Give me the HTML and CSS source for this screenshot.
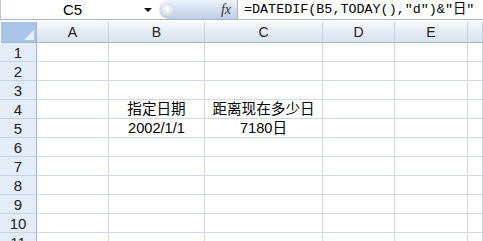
FILE: index.html
```html
<!DOCTYPE html>
<html lang="zh-CN">

<head>
    <meta charset="UTF-8">
    <title>DATEDIF</title>
    <link rel="stylesheet" href="styles.css">
</head>

<body>

    <!-- Formula Bar -->
    <div class="formula-bar">
        <div class="name-box">
            <span class="name">C5</span>
            <span class="arrow"></span>
        </div>
        <div class="fx-zone">
            <span class="knob"></span>
            <span class="fx">fx</span>
        </div>
        <div class="formula">=DATEDIF(B5,TODAY(),"d")&amp;"日"</div>
    </div>

    <!-- Sheet -->
    <div class="sheet">
        <div class="corner"><span class="tri"></span></div>
        <div class="col-head">A</div>
        <div class="col-head">B</div>
        <div class="col-head">C</div>
        <div class="col-head">D</div>
        <div class="col-head">E</div>
        <div class="col-head"></div>

        <div class="row-head">1</div>
        <div class="cell"></div><div class="cell"></div><div class="cell"></div><div class="cell"></div><div class="cell"></div><div class="cell"></div>

        <div class="row-head">2</div>
        <div class="cell"></div><div class="cell"></div><div class="cell"></div><div class="cell"></div><div class="cell"></div><div class="cell"></div>

        <div class="row-head">3</div>
        <div class="cell"></div><div class="cell"></div><div class="cell"></div><div class="cell"></div><div class="cell"></div><div class="cell"></div>

        <div class="row-head">4</div>
        <div class="cell"></div>
        <div class="cell">指定日期</div>
        <div class="cell">距离现在多少日</div>
        <div class="cell"></div><div class="cell"></div><div class="cell"></div>

        <div class="row-head">5</div>
        <div class="cell"></div>
        <div class="cell">2002/1/1</div>
        <div class="cell">7180日</div>
        <div class="cell"></div><div class="cell"></div><div class="cell"></div>

        <div class="row-head">6</div>
        <div class="cell"></div><div class="cell"></div><div class="cell"></div><div class="cell"></div><div class="cell"></div><div class="cell"></div>

        <div class="row-head">7</div>
        <div class="cell"></div><div class="cell"></div><div class="cell"></div><div class="cell"></div><div class="cell"></div><div class="cell"></div>

        <div class="row-head">8</div>
        <div class="cell"></div><div class="cell"></div><div class="cell"></div><div class="cell"></div><div class="cell"></div><div class="cell"></div>

        <div class="row-head">9</div>
        <div class="cell"></div><div class="cell"></div><div class="cell"></div><div class="cell"></div><div class="cell"></div><div class="cell"></div>

        <div class="row-head">10</div>
        <div class="cell"></div><div class="cell"></div><div class="cell"></div><div class="cell"></div><div class="cell"></div><div class="cell"></div>

        <div class="row-head">11</div>
        <div class="cell"></div><div class="cell"></div><div class="cell"></div><div class="cell"></div><div class="cell"></div><div class="cell"></div>
    </div>

</body>

</html>
```

FILE: styles.css
```css
body {
    margin: 0;
    width: 483px;
    height: 241px;
    overflow: hidden;
    background: #ffffff;
    font-family: "Liberation Sans", "Noto Sans CJK SC", sans-serif;
    color: #000;
}

/* Formula Bar */
.formula-bar {
    display: flex;
    height: 20px;
    box-sizing: border-box;
    border-bottom: 1px solid #a7b4c6;
    margin-bottom: 2px;
}

.name-box {
    width: 159px;
    display: flex;
    align-items: center;
    box-sizing: border-box;
    border-left: 1px solid #c3c9d1;
}

.name {
    flex: 1;
    text-align: center;
    font-size: 15px;
}

.arrow {
    width: 0;
    height: 0;
    border-left: 4px solid transparent;
    border-right: 4px solid transparent;
    border-top: 4px solid #111;
    margin-right: 7px;
}

.fx-zone {
    width: 78px;
    height: 19px;
    display: flex;
    align-items: center;
    justify-content: space-between;
    border-radius: 10px 0 0 10px;
    background: linear-gradient(#eef3fa, #d3dff0 50%, #bccfe8);
    border-right: 1px solid #aab7c8;
}

.knob {
    width: 14px;
    height: 14px;
    margin-left: 2px;
    border-radius: 50%;
    background: radial-gradient(circle at 45% 40%, #ffffff, #d9dfe7 55%, #a9b4c2);
}

.fx {
    font-family: "Liberation Serif", serif;
    font-style: italic;
    font-size: 14px;
    color: #333;
    margin-right: 6px;
}

.formula {
    padding-left: 6px;
    font-family: "Liberation Mono", "Noto Sans CJK SC", monospace;
    font-size: 13.4px;
    line-height: 19px;
    white-space: nowrap;
}

/* Sheet */
.sheet {
    display: grid;
    grid-template-columns: 37px 72px 96px 118px 72px 73px 1fr;
    grid-template-rows: 21px;
    grid-auto-rows: 19px;
}

.corner {
    background: #aac4e8;
    border-right: 1px solid #9eb6ce;
    border-bottom: 1px solid #9eb6ce;
    margin-left: 1px;
    position: relative;
}

.tri {
    position: absolute;
    right: 2px;
    bottom: 2px;
    width: 0;
    height: 0;
    border-left: 10px solid transparent;
    border-bottom: 10px solid #e6eef9;
}

.col-head {
    display: flex;
    align-items: center;
    justify-content: center;
    font-size: 14px;
    color: #222;
    background: linear-gradient(#f7f9fc, #e4eaf3 50%, #dbe3ee);
    border-right: 1px solid #c5d0de;
    border-bottom: 1px solid #9eb6ce;
}

.row-head {
    display: flex;
    align-items: center;
    justify-content: center;
    font-size: 15px;
    color: #222;
    background: #e4ecf7;
    border-right: 1px solid #9eb6ce;
    border-bottom: 1px solid #c5d2e3;
}

.cell {
    display: flex;
    align-items: flex-end;
    justify-content: center;
    font-size: 14.6px;
    line-height: 17px;
    border-right: 1px solid #d0d7e5;
    border-bottom: 1px solid #d0d7e5;
    white-space: nowrap;
}
```
